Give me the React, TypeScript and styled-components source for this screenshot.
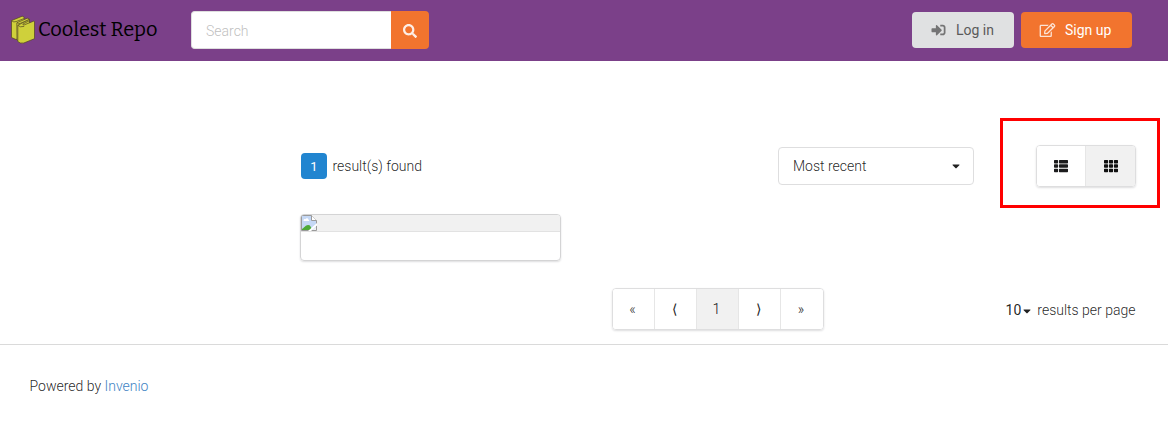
import React from "react";
import styled, { createGlobalStyle } from "styled-components";
import { FaSearch, FaSignInAlt, FaRegEdit, FaThList, FaTh, FaCaretDown } from "react-icons/fa";

const GlobalStyle = createGlobalStyle`
  * { box-sizing: border-box; }
  body {
    margin: 0;
    background: #fff;
    color: rgba(0, 0, 0, 0.87);
    font: 300 14px/20px Roboto, "Liberation Sans", sans-serif;
  }
  button, input { font: inherit; }
`;

const Header = styled.header`
  display: flex;
  align-items: flex-start;
  height: 61px;
  padding: 11px 36px 0 11px;
  background: #7b4089;
`;

const Brand = styled.a`
  display: flex;
  width: 180px;
  padding-top: 4px;
  color: #000;
  font: 400 20px/29px Bitter, "DejaVu Serif Condensed", "DejaVu Serif", serif;
  white-space: nowrap;
`;

const BrandName = styled.span`
  margin-left: 3px;
  letter-spacing: -0.05px;
`;

const SearchForm = styled.div`
  display: flex;
  width: 238px;
  height: 38px;
`;

const SearchInput = styled.input`
  width: 200px;
  padding: 2px 14px 0;
  border: 1px solid #dedede;
  border-right: 0;
  border-radius: 4px 0 0 4px;
  outline: 0;
  &::placeholder { color: #bfbfbf; opacity: 1; }
`;

const SearchButton = styled.button`
  display: flex;
  align-items: center;
  justify-content: center;
  width: 38px;
  padding: 1px 0 0;
  border: 0;
  border-radius: 0 4px 4px 0;
  background: #f2742e;
  color: #fdeee6;
`;

const Account = styled.nav`
  display: flex;
  gap: 7px;
  margin: 1px 0 0 auto;
`;

const AccountButton = styled.button<{ $primary?: boolean }>`
  display: flex;
  align-items: center;
  width: ${(p) => (p.$primary ? 111 : 102)}px;
  height: 36px;
  padding: 0 0 0 ${(p) => (p.$primary ? 18 : 19)}px;
  border: 0;
  border-radius: 4px;
  background: ${(p) => (p.$primary ? "#f2742e" : "#e0e1e2")};
  color: ${(p) => (p.$primary ? "#fff" : "#5a5a5a")};
  font-weight: 400;
  white-space: nowrap;
  svg { width: ${(p) => (p.$primary ? 17 : 15)}px; height: 14px; margin-right: ${(p) => (p.$primary ? 9 : 10)}px; opacity: 0.8; }
`;

const Results = styled.main`
  height: 283px;
  padding: 84px 32px 0 300px;
`;

const Toolbar = styled.div`
  display: flex;
  align-items: center;
  height: 42px;
`;

const Count = styled.span`
  width: 26px;
  height: 26px;
  margin: 0 5.5px 0 1px;
  border-radius: 4px;
  background: #2185d0;
  color: #fff;
  font-weight: 400;
  font-size: 13px;
  line-height: 27px;
  text-align: center;
`;

const SortSelect = styled.div`
  display: flex;
  align-items: center;
  justify-content: space-between;
  width: 196px;
  height: 38px;
  margin-left: auto;
  padding: 0 11px 0 14px;
  border: 1px solid #dededf;
  border-radius: 4px;
`;

const ToggleArea = styled.div`
  position: relative;
  margin-left: 62px;
`;

const Highlight = styled.div`
  position: absolute;
  inset: -27px -24px -21px -36px;
  border: 3px solid #f00;
  pointer-events: none;
`;

const Menu = styled.div`
  display: flex;
  height: 42px;
  border: 1px solid #dededf;
  border-radius: 4px;
  box-shadow: 0 1px 2px rgba(34, 36, 38, 0.15);
  overflow: hidden;
`;

const MenuItem = styled.button<{ $active?: boolean; $width: number }>`
  display: flex;
  align-items: center;
  justify-content: center;
  width: ${(p) => p.$width}px;
  padding: 0;
  border: 0;
  border-right: 1px solid #e6e6e6;
  background: ${(p) => (p.$active ? "#f1f1f1" : "#fff")};
  color: ${(p) => (p.$active ? "#111" : "#1c1c1d")};
  &:last-child { border-right: 0; }
`;

const Card = styled.article`
  width: 261px;
  height: 47px;
  margin-top: 27px;
  border: 1px solid #d4d4d5;
  border-radius: 4px;
  box-shadow: 0 1px 2px #dededf;
  overflow: hidden;
`;

const CardImage = styled.div`
  height: 17px;
  border-bottom: 1px solid #e2e2e2;
  background: #f1f1f1;
  svg { display: block; }
`;

const Pager = styled.div`
  display: grid;
  grid-template-columns: 312px 212px 1fr;
  align-items: center;
  margin-top: 27px;
`;

const PagerMenu = styled(Menu)`
  grid-column: 2;
  ${MenuItem} { padding-right: 2px; }
`;

const PageSize = styled.div`
  display: flex;
  align-items: center;
  justify-content: flex-end;
  padding: 1px 0.5px 0 0;
  svg { margin: 2px 4px 0 0; }
`;

const Size = styled.span`
  font-weight: 400;
`;

const Footer = styled.footer`
  padding: 31px 29.5px;
  border-top: 1px solid #dadada;
`;

const FooterLink = styled.a`
  color: #4183c4;
`;

const BooksLogo = () => (
  <svg width="24" height="30" viewBox="0 0 24 30" fill="#cfd03b" stroke="#514522" strokeWidth="0.7" strokeLinejoin="round">
    <path d="M.5 5.6 11.2 1.2l2 1v20L5 24.5.5 22.5z" />
    <path d="M.6 5.8q2.2 1.8 4.4.8L13 3.6" fill="none" />
    <path d="m5.8 7.8 10.5-4.6 2.2 1v20L8 26.5l-2-1.5z" />
    <path d="M6.2 7.8q1.3 1.6 3 .6L18.3 4.6" fill="none" />
    <path d="M6.8 10.3 17.5 4.8l1 .8-6.6 3.5q-.2 1.2 1.3.8L23 6l.5.5v17.2L12.8 28q-3.8.8-6-1.5z" />
    <path d="M6.8 10.3q2 2.4 6.4 1.1" fill="none" />
  </svg>
);

const BrokenImage = () => (
  <svg width="16" height="16" viewBox="0 0 16 16">
    <path d="M.5.5h10l5 5v10H.5z" fill="#c5d8f5" stroke="#9a9a9a" />
    <path d="M10.5.5v5h5" fill="#fff" stroke="#9a9a9a" />
    <path d="M2.5 5.5c0-1.3 1.2-1.8 2-1.2.7-1.6 2.7-1 2.7.3 1 .1 1.1.9.8 1.4H2.7z" fill="#fff" />
    <path d="M1 15v-1c2-1 3.5-4 6-4s3 2 4 5z" fill="#4eaa37" />
    <path d="M7 16 16 8v2.5L10 16z" fill="#fff" />
    <path d="M10.5 16l5.5-5v5z" fill="#f1f1f1" />
    <path d="M11 15.5h4.5V11" fill="none" stroke="#9a9a9a" />
  </svg>
);

export default function App() {
  return (
    <>
      <GlobalStyle />
      <Header>
        <Brand>
          <BooksLogo />
          <BrandName>Coolest Repo</BrandName>
        </Brand>
        <SearchForm>
          <SearchInput placeholder="Search" />
          <SearchButton aria-label="Search"><FaSearch size={14} /></SearchButton>
        </SearchForm>
        <Account>
          <AccountButton><FaSignInAlt />Log in</AccountButton>
          <AccountButton $primary><FaRegEdit />Sign up</AccountButton>
        </Account>
      </Header>
      <Results>
        <Toolbar>
          <Count>1</Count>
          <span>result(s) found</span>
          <SortSelect>Most recent<FaCaretDown size={12} /></SortSelect>
          <ToggleArea>
            <Menu>
              <MenuItem $width={49} aria-label="List"><FaThList size={14} /></MenuItem>
              <MenuItem $width={49} $active aria-label="Grid"><FaTh size={14} /></MenuItem>
            </Menu>
            <Highlight />
          </ToggleArea>
        </Toolbar>
        <Card>
          <CardImage><BrokenImage /></CardImage>
        </Card>
        <Pager>
          <PagerMenu>
            <MenuItem $width={42}>«</MenuItem>
            <MenuItem $width={42}>⟨</MenuItem>
            <MenuItem $width={42} $active>1</MenuItem>
            <MenuItem $width={42}>⟩</MenuItem>
            <MenuItem $width={42}>»</MenuItem>
          </PagerMenu>
          <PageSize><Size>10</Size><FaCaretDown size={12} />results per page</PageSize>
        </Pager>
      </Results>
      <Footer>Powered by <FooterLink>Invenio</FooterLink></Footer>
    </>
  );
}
